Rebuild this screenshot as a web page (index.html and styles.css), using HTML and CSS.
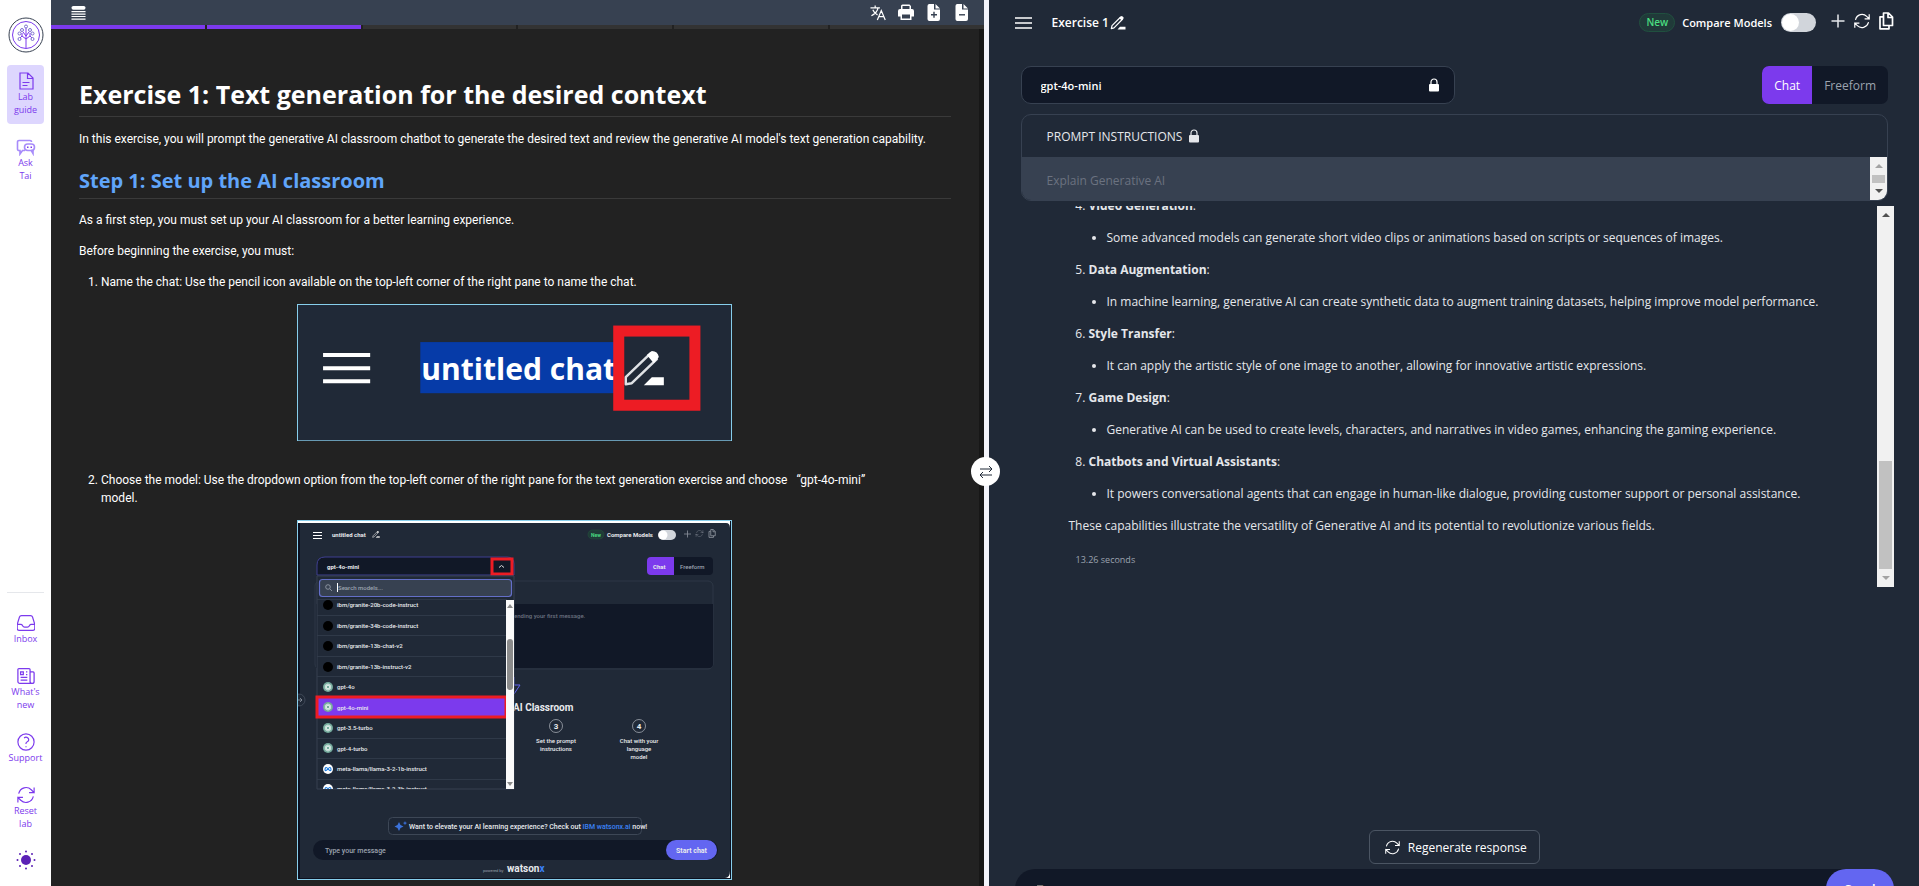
FILE: index.html
```html
<!DOCTYPE html>
<html lang="en">
<head>
<meta charset="utf-8">
<title>Exercise 1: Text generation for the desired context</title>
<link rel="stylesheet" href="styles.css">
</head>
<body>
<svg class="sprite" aria-hidden="true">
  <symbol id="i-refresh" viewBox="0 0 24 24"><path fill="none" stroke="currentColor" stroke-linecap="square" d="M16.023 9.348h4.992v-.001M2.985 19.644v-4.992m0 0h4.992m-4.993 0l3.181 3.183a8.25 8.25 0 0013.803-3.7M4.031 9.865a8.25 8.25 0 0113.803-3.7l3.181 3.182m0-4.991v4.99"/></symbol>
  <symbol id="i-lock" viewBox="0 0 12 14"><path fill="none" stroke="currentColor" stroke-width="1.2" d="M3 7V4a3 3 0 0 1 6 0v3"/><rect x="1" y="6" width="10" height="7.500" rx="1" fill="currentColor"/></symbol>
  <symbol id="i-pencil" viewBox="0 0 16 14"><path fill="none" stroke="currentColor" stroke-width="1.200" stroke-linejoin="round" d="M1.300 12.700l.7-3 8.200-8.200a1.400 1.400 0 0 1 2 2L4 11.900z"/><path fill="currentColor" d="M9.200 2l1.500-1.300a1.600 1.600 0 0 1 2.300 2.300L11.600 4.400zM7.500 13.500l2.500-2.800h5.500v2.800z"/></symbol>
  <symbol id="i-copy" viewBox="0 0 16 18"><path fill="none" stroke="currentColor" stroke-width="1.700" stroke-linejoin="round" d="M5 4.800H2v12h9v-3M5.500 1h5L14.500 5v8.500h-9zM10 1v4.500h4.500"/></symbol>
  <symbol id="i-openai" viewBox="0 0 10 10"><circle cx="5" cy="5" r="5" fill="#74aa9c"/><g fill="none" stroke="#e8f3f0" stroke-width=".7"><ellipse cx="5" cy="5" rx="1.600" ry="3.200"/><ellipse cx="5" cy="5" rx="1.600" ry="3.200" transform="rotate(60 5 5)"/><ellipse cx="5" cy="5" rx="1.600" ry="3.200" transform="rotate(120 5 5)"/></g></symbol>
  <symbol id="i-meta" viewBox="0 0 10 10"><circle cx="5" cy="5" r="5" fill="#fff"/><path fill="none" stroke="#1b7be0" stroke-width="1.100" d="M5 5C4 3.500 3.600 3.300 3 3.500 1.800 4 1.600 6.500 2.700 6.600 3.600 6.700 4.200 5.600 5 5 5.800 3.800 6.400 3.300 7 3.500 8.200 4 8.400 6.500 7.300 6.600 6.400 6.700 5.800 5.800 5 5z"/></symbol>
</svg>

<nav class="rail" aria-label="Lab tools">
  <a class="logo" href="#" aria-label="Home">
    <svg viewBox="0 0 36 36" fill="none"><circle cx="18" cy="18" r="17" stroke="#374151"/><circle cx="18" cy="18" r="13.500" stroke="#7c3aed"/>
      <path stroke="#7c3aed" d="M18 31V11M18 22l-4-3v-3M18 22l4-3v-3M18 19l-3-4M18 19l3-4M14 19l-2 2M22 19l2 2"/>
      <g stroke="#7c6fd0"><circle cx="18" cy="9.500" r="1.500"/><circle cx="14" cy="13" r="1.500"/><circle cx="22" cy="13" r="1.500"/><circle cx="11.500" cy="16.500" r="1.500"/><circle cx="24.500" cy="16.500" r="1.500"/><circle cx="11.500" cy="22" r="1.500"/><circle cx="24.500" cy="22" r="1.500"/></g></svg>
  </a>
  <button class="tool active" type="button"><svg viewBox="0 0 18 18" fill="none" stroke="currentColor" stroke-width="1.200"><path d="M3 1h8l5 5v11H3zM10.500 1v5.500H16M5.500 10.500h7M5.500 13.500h5"/></svg>Lab guide</button>
  <button class="tool ask" type="button"><svg class="ask-icon" viewBox="0 0 20 18" fill="none" stroke="#a78bfa" stroke-width="1.600"><path d="M9 12.500H6.500L4 16v-3.500H3A1.500 1.500 0 0 1 1.500 11V4A1.500 1.500 0 0 1 3 2.500h11A1.500 1.500 0 0 1 15.500 4"/><rect x="8.500" y="6" width="10" height="6.500" rx="3.200"/><path d="M15 12l2 3.500V12"/><path stroke="#7c3aed" d="M11 9.200h1.500M14.500 9.200H16"/></svg>Ask<br>Tai</button>
  <div class="rail-foot">
    <button class="tool" type="button"><svg viewBox="2 2 20 20" fill="none" stroke="currentColor" stroke-width="1.300"><path d="M2.250 13.500h3.860a2.250 2.250 0 012.012 1.244l.256.512a2.250 2.250 0 002.013 1.244h3.218a2.250 2.250 0 002.013-1.244l.256-.512a2.250 2.250 0 012.013-1.244h3.859m-19.500.338V18a2.250 2.250 0 002.250 2.250h15A2.250 2.250 0 0021.750 18v-4.162c0-.224-.034-.447-.1-.661L19.240 5.338a2.250 2.250 0 00-2.150-1.588H6.911a2.250 2.250 0 00-2.150 1.588L2.350 13.177a2.250 2.250 0 00-.1.661z"/></svg>Inbox</button>
    <button class="tool" type="button"><svg viewBox="2 2 20 20" fill="none" stroke="currentColor" stroke-width="1.400"><path d="M12 7.500h1.500m-1.500 3h1.500m-7.500 3h7.500m-7.500 3h7.500m3-9h3.375c.621 0 1.125.504 1.125 1.125V18a2.250 2.250 0 01-2.250 2.250M16.500 7.500V18a2.250 2.250 0 002.250 2.250M16.500 7.500V4.875c0-.621-.504-1.125-1.125-1.125H4.125C3.504 3.750 3 4.254 3 4.875V18a2.250 2.250 0 002.250 2.250h13.500M6 7.500h3v3H6v-3z"/></svg>What's<br>new</button>
    <button class="tool" type="button"><svg viewBox="2 2 20 20" fill="none" stroke="currentColor" stroke-width="1.300"><path d="M9.879 7.519c1.171-1.025 3.071-1.025 4.242 0 1.172 1.025 1.172 2.687 0 3.712-.203.179-.43.326-.67.442-.745.361-1.450.999-1.450 1.827v.75M21 12a9 9 0 11-18 0 9 9 0 0118 0zm-9 5.250h.008v.008H12v-.008z"/></svg>Support</button>
    <button class="tool" type="button"><svg viewBox="2 2 20 20" stroke-width="1.300"><use href="#i-refresh" width="24" height="24"/></svg>Reset<br>lab</button>
    <button class="theme" type="button" aria-label="Toggle theme"><svg viewBox="0 0 20 20" fill="#5b21b6"><circle cx="10" cy="10" r="5"/><circle cx="10" cy="1.500" r="1"/><circle cx="10" cy="18.500" r="1"/><circle cx="1.500" cy="10" r="1"/><circle cx="18.500" cy="10" r="1"/><circle cx="4" cy="4" r="1"/><circle cx="16" cy="4" r="1"/><circle cx="4" cy="16" r="1"/><circle cx="16" cy="16" r="1"/></svg></button>
  </div>
</nav>

<main class="guide">
  <div class="guide-bar">
    <button type="button" aria-label="Table of contents"><svg viewBox="0 0 16 16" fill="none" stroke="#fff"><path stroke-width="4" stroke-linecap="round" d="M2.500 3h11"/><path stroke-width="1.200" d="M.5 7h15M.5 9.700h15M.5 12.300h15M.5 15h15"/></svg></button>
    <div class="guide-actions">
      <button type="button" aria-label="Translate"><svg viewBox="0 0 17 17" fill="none" stroke="#fff" stroke-width="1.300"><path d="M.5 3.500h10M5.500 1v2.500M8.500 3.500C8 7 5 10 1.500 12M3 5.500c1 2.500 3 4.500 5 5.500M7.800 16.500l4.200-10 4.200 10M9.300 13h5.400"/></svg></button>
      <button type="button" aria-label="Print"><svg viewBox="0 0 16 17"><path fill="#fff" d="M3 5V2a1.500 1.500 0 0 1 1.500-1.500h7L13 2v3h1a2 2 0 0 1 2 2v5.500h-2.500V16h-11v-3.500H0V7a2 2 0 0 1 2-2zm1.500 0h7V2h-7zM4 10.500v4h8v-4z"/></svg></button>
      <button type="button" aria-label="Increase text size"><svg viewBox="0 0 16 17"><path fill="#fff" d="M3 0h5v5.500h6V15a2 2 0 0 1-2 2H3a2 2 0 0 1-1.500-2V2A2 2 0 0 1 3 0zM9.500 0l4.500 4.500H9.500z"/><path stroke="#374151" stroke-width="1.400" d="M5 10.800h6M8 7.800v6"/></svg></button>
      <button type="button" aria-label="Decrease text size"><svg viewBox="0 0 16 17"><path fill="#fff" d="M3 0h5v5.500h6V15a2 2 0 0 1-2 2H3a2 2 0 0 1-1.500-2V2A2 2 0 0 1 3 0zM9.500 0l4.500 4.500H9.500z"/><path stroke="#374151" stroke-width="1.400" d="M5 10.800h6"/></svg></button>
    </div>
  </div>
  <div class="steps" aria-hidden="true"><i class="done"></i><i class="done"></i><i></i><i></i><i></i><i></i></div>
  <article class="doc">
    <h1>Exercise 1: Text generation for the desired context</h1>
    <p>In this exercise, you will prompt the generative AI classroom chatbot to generate the desired text and review the generative AI model's text generation capability.</p>
    <h2>Step 1: Set up the AI classroom</h2>
    <p>As a first step, you must set up your AI classroom for a better learning experience.</p>
    <p>Before beginning the exercise, you must:</p>
    <ol>
      <li>Name the chat: Use the pencil icon available on the top-left corner of the right pane to name the chat.
        <svg class="figure" viewBox="0 0 434 137" role="img" aria-label="Pencil icon next to the chat name">
          <rect width="434" height="137" fill="#202937"/>
          <path stroke="#fff" stroke-width="4" d="M26 51h47M26 64h47M26 77h47"/>
          <rect x="123" y="38" width="196" height="51" fill="#063ba8"/>
          <text x="124" y="76" class="f-name">untitled chat</text>
          <path fill="none" stroke="#dfe1e5" stroke-width="2.500" stroke-linejoin="round" d="M328 80v-7l25-24 6 6-25 24z"/>
          <path fill="#fff" d="M349 51l5-4q6 0 7 6l-5 6zM346 81l8-8h12v8z"/>
          <rect x="321" y="27" width="76" height="74" fill="none" stroke="#ed1c24" stroke-width="11"/>
          <rect x=".5" y=".5" width="433" height="136" fill="none" stroke="#87ceeb"/>
        </svg>
      </li>
      <li>Choose the model: Use the dropdown option from the top-left corner of the right pane for the text generation exercise and choose &nbsp; “gpt-4o-mini”<br>model.
        <svg class="figure" viewBox="0 0 435 360" role="img" aria-label="Model list with gpt-4o-mini selected">
          <rect width="435" height="360" fill="#0b1020"/><rect x="1" y="1" width="432" height="2" fill="#fff"/><rect x="426" y="1" width="7" height="7" fill="#fff"/><rect x="424" y="347" width="9" height="11" fill="#fff"/>
          <path d="M3 3h426q4 0 4 5v343q0 7-5 7H3z" fill="#202937"/>
          <path stroke="#fff" stroke-width="1.200" d="M16 12.500h9M16 15.500h9M16 18.500h9"/>
          <text x="35" y="17" class="t6 b">untitled chat</text><use href="#i-pencil" x="75" y="11" width="8" height="7" color="#ddd"/>
          <rect x="291" y="10" width="16" height="9" rx="4.500" fill="#1f3b37" stroke="#24563f" stroke-width=".5"/><text x="294" y="17" class="t5 b green">New</text>
          <text x="310" y="17" class="t6 b">Compare Models</text>
          <rect x="361" y="10" width="18" height="10" rx="5" fill="#d1d5db"/><circle cx="366" cy="15" r="4.500" fill="#fff"/>
          <path stroke="#8c929d" stroke-width=".8" d="M387 14h7M390.500 10.500v7"/><use href="#i-refresh" x="398" y="9" width="9" height="9" color="#8c929d"/><use href="#i-copy" x="411" y="9" width="8" height="9" color="#8c929d"/>
          <rect x="18" y="61" width="398" height="88" rx="5" fill="#202937" stroke="#374151" stroke-width=".6"/><path d="M19 84h397v60q0 4-4 4H19z" fill="#111827"/>
          <text x="217" y="98" class="t6 dim">ending your first message.</text>
          <path d="M354 37h29v18h-29q-4 0-4-4V41q0-4 4-4z" fill="#7c3aed"/><path d="M377 37h35q4 0 4 4v10q0 4-4 4h-35z" fill="#111827"/>
          <text x="356" y="49" class="t6 b">Chat</text><text x="383" y="49" class="t6 muted">Freeform</text>
          <path fill="none" stroke="#6366f1" d="M217 157v8h6l-6 9"/>
          <text x="216" y="191" class="t10 b">AI Classroom</text>
          <g fill="none" stroke="#a2a7b0" stroke-width=".8"><circle cx="259" cy="206" r="6.500"/><circle cx="342" cy="206" r="6.500"/></g>
          <g text-anchor="middle"><text x="259" y="209" class="t8 b">3</text><text x="342" y="209" class="t8 b">4</text>
          <text x="259" y="223" class="t6">Set the prompt</text><text x="259" y="231" class="t6">instructions</text><text x="342" y="223" class="t6">Chat with your</text><text x="342" y="231" class="t6">language</text><text x="342" y="239" class="t6">model</text></g>
          <path d="M20 55V45q0-8 8-8h182q7 0 7 7v11z" fill="#111827" stroke="#3f3f91"/>
          <text x="30" y="49" class="t6 b">gpt-4o-mini</text><path fill="none" stroke="#ddd" d="M202 47.500l2.500-2 2.500 2"/><rect x="195" y="39" width="20" height="15" fill="none" stroke="#ed1c24" stroke-width="3"/>
          <path d="M20 56h197v213H20z" fill="#202937" stroke="#374151"/>
          <rect x="22.500" y="59.500" width="192" height="17" rx="3" fill="#374151" stroke="#646fc8" stroke-width="1.200"/>
          <circle cx="31" cy="67" r="2.300" fill="none" stroke="#9ca3af" stroke-width=".8"/><path stroke="#9ca3af" stroke-width=".8" d="M33 69l2 2"/><path stroke="#fff" d="M40.500 63v9"/><text x="41" y="70" class="t6 muted">Search models...</text>
          <path d="M20 79.500h190M20 95.500h190M20 115.500h190M20 136.500h190M20 156.500h190M20 218.500h190M20 238.500h190M20 259.500h190" stroke="#333d4c" stroke-width=".8"/>
          <circle cx="31" cy="85" r="5"/><circle cx="31" cy="106" r="5"/><circle cx="31" cy="126" r="5"/><circle cx="31" cy="147" r="5"/>
          <text x="40" y="87" class="t6">ibm/granite-20b-code-instruct</text><text x="40" y="108" class="t6">ibm/granite-34b-code-instruct</text><text x="40" y="128" class="t6">ibm/granite-13b-chat-v2</text><text x="40" y="149" class="t6">ibm/granite-13b-instruct-v2</text>
          <use href="#i-openai" x="26" y="162" width="10" height="10"/><text x="40" y="169" class="t6">gpt-4o</text>
          <rect x="20" y="177" width="189" height="20" fill="#7c3aed" stroke="#ed1c24" stroke-width="3"/><use href="#i-openai" x="26" y="182" width="10" height="10"/><text x="40" y="190" class="t6">gpt-4o-mini</text>
          <use href="#i-openai" x="26" y="203" width="10" height="10"/><text x="40" y="210" class="t6">gpt-3.5-turbo</text><use href="#i-openai" x="26" y="223" width="10" height="10"/><text x="40" y="231" class="t6">gpt-4-turbo</text>
          <use href="#i-meta" x="26" y="244" width="10" height="10"/><text x="40" y="251" class="t6">meta-llama/llama-3-2-1b-instruct</text>
          <svg x="20" y="260" width="190" height="9" viewBox="20 260 190 9"><use href="#i-meta" x="26" y="264" width="10" height="10"/><text x="40" y="271" class="t6">meta-llama/llama-3-2-3b-instruct</text></svg>
          <rect x="209" y="80" width="8" height="189" fill="#fafafa"/><rect x="210" y="119" width="6" height="51" rx="3" fill="#8b8b8b"/><path fill="#8b8b8b" d="M210 88l3-4 3 4zM210 262l3 4 3-4z"/>
          <circle cx="2" cy="180" r="6" fill="#202937" stroke="#4b5563" stroke-width=".7"/><path d="M0 180h5M3 178l2 2-2 2" stroke="#9ca3af" fill="none" stroke-width=".7"/>
          <rect x="91.500" y="297.500" width="253" height="17" rx="4" fill="#1d2635" stroke="#3d4756"/>
          <path fill="#3b72dc" d="M102 302l1.500 3 3 1.500-3 1.500-1.500 3-1.500-3-3-1.500 3-1.500zM108 301l.6 1.500 1.500.6-1.500.6-.6 1.500-.6-1.500-1.500-.6 1.500-.6z"/>
          <text x="112" y="309" class="t7">Want to elevate your AI learning experience? Check out <tspan class="blue">IBM watsonx.ai</tspan> now!</text>
          <rect x="16" y="320" width="405" height="20" rx="10" fill="#111827"/><text x="28" y="333" class="t7 muted">Type your message</text>
          <rect x="369" y="320" width="51" height="20" rx="10" fill="#6366f1"/><text x="379" y="333" class="t7 b">Start chat</text>
          <text x="186" y="352" class="t4 muted">powered by</text><text x="210" y="352" class="t10 b">watson<tspan class="blue">x</tspan></text>
          <rect x=".5" y=".5" width="434" height="359" fill="none" stroke="#87ceeb"/>
        </svg>
      </li>
    </ol>
  </article>
</main>

<div class="splitter"><button type="button" aria-label="Resize panes"><svg viewBox="0 0 16 16" fill="none" stroke="#1f2937"><path d="M2 5h12M11 2l3 3-3 3M14 11H2M5 8l-3 3 3 3"/></svg></button></div>

<section class="chat" aria-label="AI classroom">
  <header class="chat-head">
    <button type="button" class="menu" aria-label="Menu"><svg viewBox="0 0 17 12" stroke="#fff" stroke-width="1.500"><path d="M0 1h17M0 6h17M0 11h17"/></svg></button>
    <h3>Exercise 1</h3>
    <button type="button" class="rename" aria-label="Rename chat"><svg><use href="#i-pencil"/></svg></button>
    <span class="badge">New</span>
    <label class="compare" for="cmp">Compare Models</label>
    <input id="cmp" class="switch" type="checkbox">
    <button type="button" class="act plus" aria-label="New chat"><svg viewBox="0 0 16 18" stroke="#e5e7eb" stroke-width="1.500"><path d="M1.500 9h13M8 2.500v13"/></svg></button>
    <button type="button" class="act turn" aria-label="Restart"><svg viewBox="2 2 20 20" stroke-width="1.500"><use href="#i-refresh" width="24" height="24"/></svg></button>
    <button type="button" class="act" aria-label="Copy"><svg><use href="#i-copy"/></svg></button>
  </header>
  <div class="model-row">
    <div class="model"><select disabled aria-label="Model"><option>gpt-4o-mini</option></select><svg class="lock"><use href="#i-lock"/></svg></div>
    <div class="modes"><button type="button" class="on">Chat</button><button type="button">Freeform</button></div>
  </div>
  <div class="prompt">
    <label for="instr">PROMPT INSTRUCTIONS <svg class="lock"><use href="#i-lock"/></svg></label>
    <div class="prompt-body"><textarea id="instr" rows="1" disabled>Explain Generative AI</textarea>
      <div class="bar small" aria-hidden="true"><b class="up pale"></b><i></i><b class="down"></b></div></div>
  </div>
  <div class="thread">
    <div class="messages">
      <ol start="4">
        <li><strong>Video Generation</strong>:<ul><li>Some advanced models can generate short video clips or animations based on scripts or sequences of images.</li></ul></li>
        <li><strong>Data Augmentation</strong>:<ul><li>In machine learning, generative AI can create synthetic data to augment training datasets, helping improve model performance.</li></ul></li>
        <li><strong>Style Transfer</strong>:<ul><li>It can apply the artistic style of one image to another, allowing for innovative artistic expressions.</li></ul></li>
        <li><strong>Game Design</strong>:<ul><li>Generative AI can be used to create levels, characters, and narratives in video games, enhancing the gaming experience.</li></ul></li>
        <li><strong>Chatbots and Virtual Assistants</strong>:<ul><li>It powers conversational agents that can engage in human-like dialogue, providing customer support or personal assistance.</li></ul></li>
      </ol>
      <p>These capabilities illustrate the versatility of Generative AI and its potential to revolutionize various fields.</p>
      <small>13.26 seconds</small>
    </div>
    <div class="bar" aria-hidden="true"><b class="up"></b><i></i><b class="down pale"></b></div>
  </div>
  <button type="button" class="regen"><svg viewBox="2 2 20 20" stroke-width="1.400"><use href="#i-refresh" width="24" height="24"/></svg>Regenerate response</button>
  <form class="composer"><input type="text" aria-label="Message" placeholder="Type your message"><button type="button">Send</button></form>
</section>
</body>
</html>
```
FILE: styles.css
```css
* { box-sizing: border-box; }
body { margin: 0; display: flex; height: 100vh; overflow: hidden; background: #222; color: #fff; font-family: "Open Sans", "Noto Sans", sans-serif; font-size: 12px; }
button { padding: 0; border: 0; background: none; color: inherit; font: inherit; }
svg { display: block; }
.sprite { position: absolute; width: 0; height: 0; }

.rail { flex: none; width: 51px; padding: 17px 7px 16px; display: flex; flex-direction: column; align-items: stretch; background: #fff; color: #7c3aed; }
.logo { align-self: center; width: 36px; height: 36px; }
.logo svg { width: 36px; height: 36px; }
.tool { padding: 7px 0; border-radius: 4px; font-size: 9px; font-weight: 400; line-height: 13px; text-align: center; }
.tool svg { width: 18px; height: 18px; margin: 0 auto; }
.tool.active { margin-top: 12px; padding: 7px 5px 8px; background: #ddd6fe; }
.tool.ask { margin-top: 7px; }
.tool .ask-icon { width: 20px; }
.rail-foot { margin-top: auto; padding-top: 14px; border-top: 1px solid #e5e7eb; display: flex; flex-direction: column; gap: 8px; }
.theme { margin-top: 5px; }
.theme svg { width: 20px; height: 20px; margin: auto; }

.guide { flex: 0 0 calc(50% - 27px); min-width: 0; display: flex; flex-direction: column; }
.guide-bar { flex: none; height: 25px; padding: 0 14px 0 20px; display: flex; justify-content: space-between; align-items: center; background: #374151; }
.guide-bar > button svg { width: 15px; height: 15px; }
.guide-actions { display: flex; gap: 12px; }
.guide-actions svg { width: 16px; height: 17px; }
.steps { flex: none; height: 4px; display: grid; grid-template-columns: repeat(6, 1fr); gap: 2px; }
.steps i { background: #333; }
.steps .done { background: #7c3aed; }
.doc { flex: 1; min-height: 0; overflow: hidden; padding: 47px 28px 0; border-right: 5px solid #171717; font-family: Roboto, "Open Sans", sans-serif; line-height: 18px; }
h1 { margin: 0 0 13px; padding-bottom: 4px; border-bottom: 1px solid #3a3a3a; font-family: "Open Sans", sans-serif; font-size: 25px; line-height: 36px; font-weight: 700; }
h2 { margin: 18px 0 12px; padding-bottom: 3px; border-bottom: 1px solid #3a3a3a; color: #60a5fa; font-family: "Open Sans", sans-serif; font-size: 20px; line-height: 29px; font-weight: 700; }
.doc p { margin: 0 0 13px; }
.doc ol { margin: 0; padding-left: 22px; }
.doc li + li { margin-top: 30px; }
.figure { width: 435px; max-width: 100%; margin: 13px auto 0 196px; }
.figure text { fill: #e8eaed; }
.figure .f-name { font-family: "Open Sans", sans-serif; font-size: 30px; font-weight: 700; fill: #fff; }
.t4 { font-size: 4px; }
.t5 { font-size: 5px; }
.t6 { font-size: 6px; }
.t7 { font-size: 7px; }
.t8 { font-size: 8px; }
.t10 { font-size: 10px; }
.t5, .t6, .t7 { font-weight: 500; }
.figure .b { font-weight: 700; }
.figure .dim { fill: #6b7280; }
.figure .muted { fill: #9ca3af; }
.figure .green { fill: #4ade80; }
.figure .blue { fill: #3b82f6; }

.splitter { flex: none; position: relative; width: 5px; background: #f3f4fb; }
.splitter button { position: absolute; z-index: 1; top: 50%; left: 50%; width: 29px; height: 29px; margin: 14px 0 0 -15px; border-radius: 50%; background: #fff; }
.splitter svg { width: 16px; height: 16px; margin: auto; }

.chat { flex: 1; min-width: 0; padding: 0 25px 0 26px; display: flex; flex-direction: column; background: #202937; overflow: hidden; }
.chat-head { flex: none; height: 45px; display: flex; align-items: center; }
.menu svg { width: 17px; height: 12px; }
h3 { margin: 0 1px 0 20px; font-size: 12px; line-height: 18px; font-weight: 600; }
.rename svg { width: 16px; height: 14px; }
.badge { margin: 0 7px 0 auto; padding: 0 6px; border: 1px solid #20503f; border-radius: 10px; background: #203a39; color: #4ade80; font-size: 10px; font-weight: 600; line-height: 17px; }
.compare { font-size: 11px; font-weight: 600; }
.switch { appearance: none; width: 35px; height: 19px; margin: 0 14px 0 9px; padding: 1px; border-radius: 10px; background: #d1d5db; }
.switch::before { content: ""; display: block; width: 17px; height: 17px; border-radius: 50%; background: #fff; }
.act { margin: 0 0 4px 8px; }
.act.plus { margin-left: 0; }
.act svg { width: 16px; height: 18px; }
.model-row { flex: none; height: 38px; margin: 21px 6px 0; display: flex; justify-content: space-between; }
.model { flex: 0 1 434px; padding: 0 14px 0 19px; display: flex; align-items: center; border: 1px solid #374151; border-radius: 10px; background: #111827; }
.model select { flex: 1; appearance: none; padding: 0; border: 0; background: none; color: #fff; opacity: 1; font: 600 11px "Open Sans", "Noto Sans", sans-serif; }
.lock { width: 12px; height: 14px; }
.modes { display: flex; border-radius: 7px; overflow: hidden; background: #111827; }
.modes button { padding: 0 12px; color: #9ca3af; font-size: 12px; }
.modes .on { background: #7c3aed; color: #fff; }
.prompt { flex: none; margin: 10px 6px 0; border: 1px solid #374151; border-radius: 10px; overflow: hidden; }
.prompt label { height: 42px; padding-left: 25px; display: flex; align-items: center; gap: 6px; color: #e5e7eb; font-size: 12px; }
.prompt-body { display: flex; height: 43px; background: #374151; }
.prompt textarea { flex: 1; height: 43px; padding: 15px 25px 0; border: 0; resize: none; overflow: hidden; background: none; color: #6b7280; font: 12px/18px "Open Sans", "Noto Sans", sans-serif; }
.bar { flex: none; width: 17px; padding: 7px 2px; display: flex; flex-direction: column; align-items: center; background: #f1f1f1; }
.bar i { width: 13px; height: 108px; margin: auto 0 7px; background: #c1c1c1; }
.bar.small i { height: 8px; margin: auto 0; }
.bar b { border: 4px solid transparent; border-top-width: 0; border-bottom: 4px solid #505050; }
.bar .down { border-top: 4px solid #505050; border-bottom-width: 0; }
.bar .up.pale { border-bottom-color: #a3a3a3; }
.bar .down.pale { border-top-color: #a3a3a3; }
.thread { flex: 0 1 43vh; min-height: 0; margin-top: 5px; display: flex; overflow: hidden; }
.messages { flex: 1; min-width: 0; padding: 0 30px 18px 54px; display: flex; flex-direction: column; justify-content: flex-end; overflow: hidden; color: #e5e7eb; font-size: 12px; line-height: 20px; }
.messages ol { margin: 0; padding-left: 20px; }
.messages ul { margin: 12px 0; padding-left: 18px; list-style: disc; }
.messages p { margin: 0; }
.messages small { margin: 15px 0 0 7px; color: #9ca3af; font-size: 9px; line-height: 18px; }
.regen { flex: none; align-self: center; height: 34px; margin: auto 0 5px; padding: 0 12px 0 15px; display: flex; align-items: center; gap: 8px; border: 1px solid #4b5563; border-radius: 6px; font-size: 12px; }
.regen svg { width: 15px; height: 15px; }
.composer { flex: none; height: 40px; margin-bottom: -23px; display: flex; border-radius: 20px; background: #111827; }
.composer input { flex: 1; min-width: 0; padding: 0 22px; border: 0; background: none; color: #fff; font: inherit; }
.composer button { width: 68px; border-radius: 20px; background: #6366f1; font-size: 13px; font-weight: 600; }
```
